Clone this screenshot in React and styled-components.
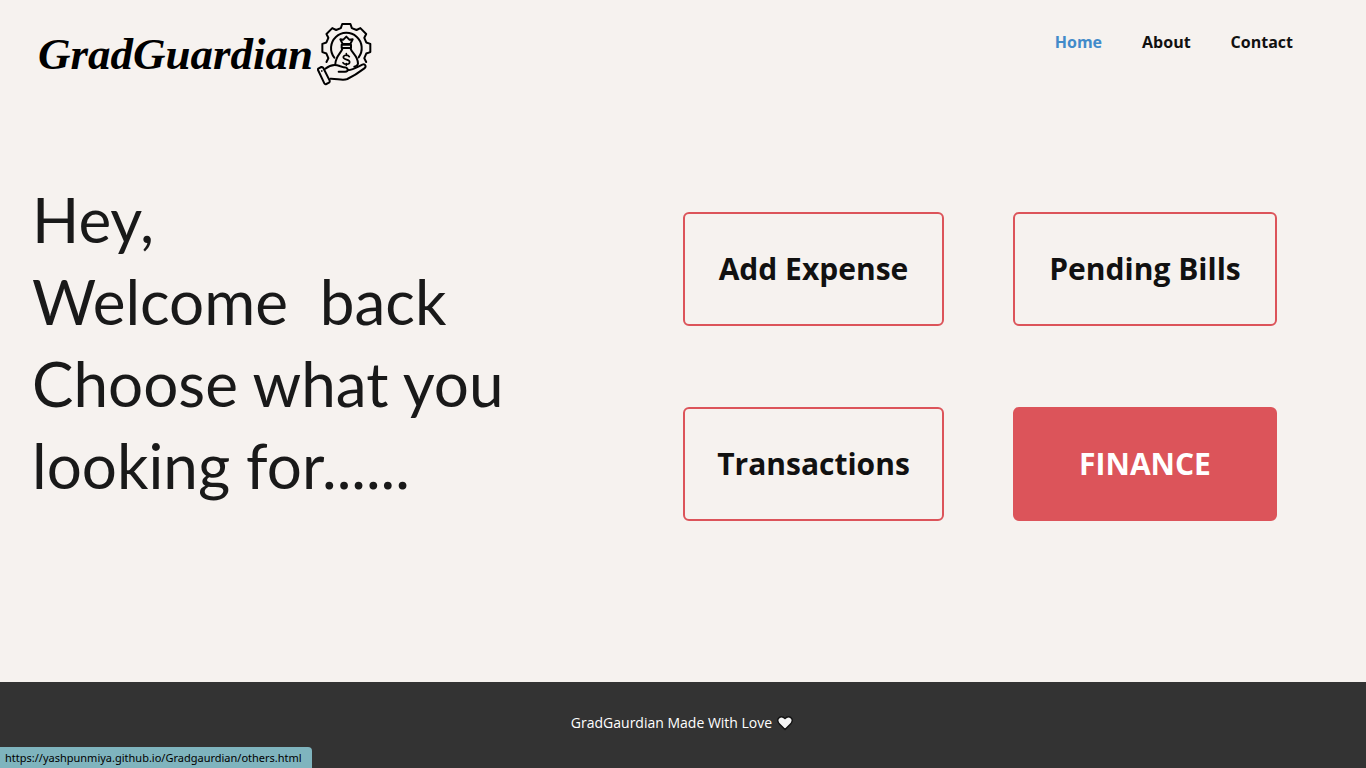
import React from 'react';
import styled, { createGlobalStyle } from 'styled-components';

const GlobalStyle = createGlobalStyle`
  *, *::before, *::after { box-sizing: border-box; }
  html { background: #f6f2ef; }
  body {
    margin: 0;
    background: #f6f2ef;
    color: #111;
    font-family: 'Open Sans', 'Noto Sans', sans-serif;
  }
`;

const Page = styled.div`
  min-height: 100vh;
  display: flex;
  flex-direction: column;
`;

const Header = styled.header`
  display: flex;
  justify-content: space-between;
  align-items: flex-start;
  padding: 20px 73px 0 38px;
`;

const Brand = styled.a`
  display: flex;
  align-items: center;
  gap: 4px;
  height: 68px;
  color: #000;
  text-decoration: none;
`;

const BrandName = styled.span`
  font-family: 'Liberation Serif', serif;
  font-size: 45px;
  line-height: 64px;
  font-weight: 700;
  font-style: italic;
`;

const BrandIcon = styled.svg`
  display: block;
  width: 55px;
  height: 64px;
`;

const Nav = styled.nav`
  display: flex;
  gap: 40px;
  padding-top: 10px;
`;

const NavLink = styled.a`
  color: ${({ $active }) => ($active ? '#428bca' : '#111')};
  font-size: 16px;
  line-height: 24px;
  font-weight: 700;
  text-decoration: none;
`;

const Main = styled.main`
  flex: 1;
  display: grid;
  grid-template-columns: 1fr 1fr;
  align-items: start;
  padding-top: 90px;
`;

const Greeting = styled.h1`
  margin: 0;
  padding-left: 32px;
  color: #191919;
  font-family: Lato, sans-serif;
  font-size: 62px;
  line-height: 82px;
  font-weight: 400;
  white-space: pre-line;
`;

const Actions = styled.div`
  display: grid;
  grid-template-columns: 261fr 264fr;
  gap: 81px 69px;
  padding: 34px 89px 0 0;
`;

const ActionButton = styled.button`
  min-height: 114px;
  padding: 0 16px;
  border: 2px solid #dc545a;
  border-radius: 6px;
  background: ${({ $filled }) => ($filled ? '#dc545a' : 'transparent')};
  color: ${({ $filled }) => ($filled ? '#fff' : '#111')};
  font-family: inherit;
  font-size: 30px;
  line-height: 40px;
  font-weight: 700;
  cursor: pointer;
`;

const Footer = styled.footer`
  display: flex;
  justify-content: center;
  align-items: center;
  gap: 5px;
  min-height: 86px;
  padding: 0 2px 4px 0;
  background: #333;
  color: #fff;
  font-size: 14px;
  line-height: 20px;
`;

const Heart = styled.svg`
  width: 16px;
  height: 16px;
`;

const StatusLink = styled.div`
  position: fixed;
  left: 0;
  bottom: 0;
  padding: 2px 10px 1px 5px;
  border-radius: 0 4px 0 0;
  background: #7fb4be;
  color: #000;
  font-family: 'Noto Sans', sans-serif;
  font-size: 11px;
  line-height: 18px;
`;

const gear = Array.from({ length: 8 }, (_, tooth) => {
  const angle = (tooth * Math.PI) / 4 - Math.PI / 2;
  return [[-0.27, 62], [-0.17, 73], [0.17, 73], [0.27, 62]].map(
    ([offset, radius]) => `${108 + radius * Math.cos(angle + offset)},${102 + radius * Math.sin(angle + offset)}`
  );
}).flat();

function Logo() {
  return (
    <BrandIcon viewBox="20 24 165 192" fill="none" stroke="#000" strokeWidth="6" strokeLinejoin="round" strokeLinecap="round" aria-hidden="true">
      <polyline points={[...gear.slice(22), ...gear.slice(0, 14)].join(' ')} />
      <path d="M72 131A46 46 0 1 1 145 130" />
      <path d="m97 90-7-14 9 1 9-9 9 9 10-1-7 14ZM94 92h28v10H94z" />
      <path d="M96 104c-3 13-20 22-21 46M121 104c3 13 22 22 22 45-1 5-5 8-11 9" />
      <path strokeWidth="5" d="M117 128c-5-7-18-5-18 2 0 9 19 5 19 14 0 8-15 9-20 2M108 119v5m0 25v5" />
      <path d="M23 168q-1-3 2-5l8-4q4-1 6 3l19 38q1 4-2 6l-8 4q-4 2-6-2Z" />
      <path d="M45 164c12-10 29-14 43-8l12 4c14 0 17 13 4 13H85M113 169c16-2 28-10 43-17 9-4 13 6 6 11-17 13-30 22-51 32-15 6-31-2-51-1" />
      <circle cx="34" cy="171" r="1" strokeWidth="3" />
    </BrandIcon>
  );
}

const links = ['Home', 'About', 'Contact'];
const actions = ['Add Expense', 'Pending Bills', 'Transactions', 'FINANCE'];

export default function App() {
  return (
    <>
      <GlobalStyle />
      <Page>
        <Header>
          <Brand href="#home">
            <BrandName>GradGuardian</BrandName>
            <Logo />
          </Brand>
          <Nav aria-label="Main">
            {links.map((label) => (
              <NavLink key={label} href={`#${label.toLowerCase()}`} $active={label === 'Home'}>{label}</NavLink>
            ))}
          </Nav>
        </Header>
        <Main>
          <Greeting>{'Hey,\nWelcome \u00a0back\nChoose what you\nlooking for......'}</Greeting>
          <Actions>
            {actions.map((label) => (
              <ActionButton key={label} type="button" $filled={label === 'FINANCE'}>{label}</ActionButton>
            ))}
          </Actions>
        </Main>
        <Footer>
          <span>GradGaurdian Made With Love</span>
          <Heart viewBox="0 0 16 16" aria-hidden="true">
            <path d="M8 14.5 2 8.500C-1.500 3.500 4-.5 8 3.500c4-4 9.500 0 6 5Z" fill="#f5f5f5" stroke="#111" strokeWidth="1.3" />
          </Heart>
        </Footer>
      </Page>
      <StatusLink>https://yashpunmiya.github.io/Gradgaurdian/others.html</StatusLink>
    </>
  );
}
